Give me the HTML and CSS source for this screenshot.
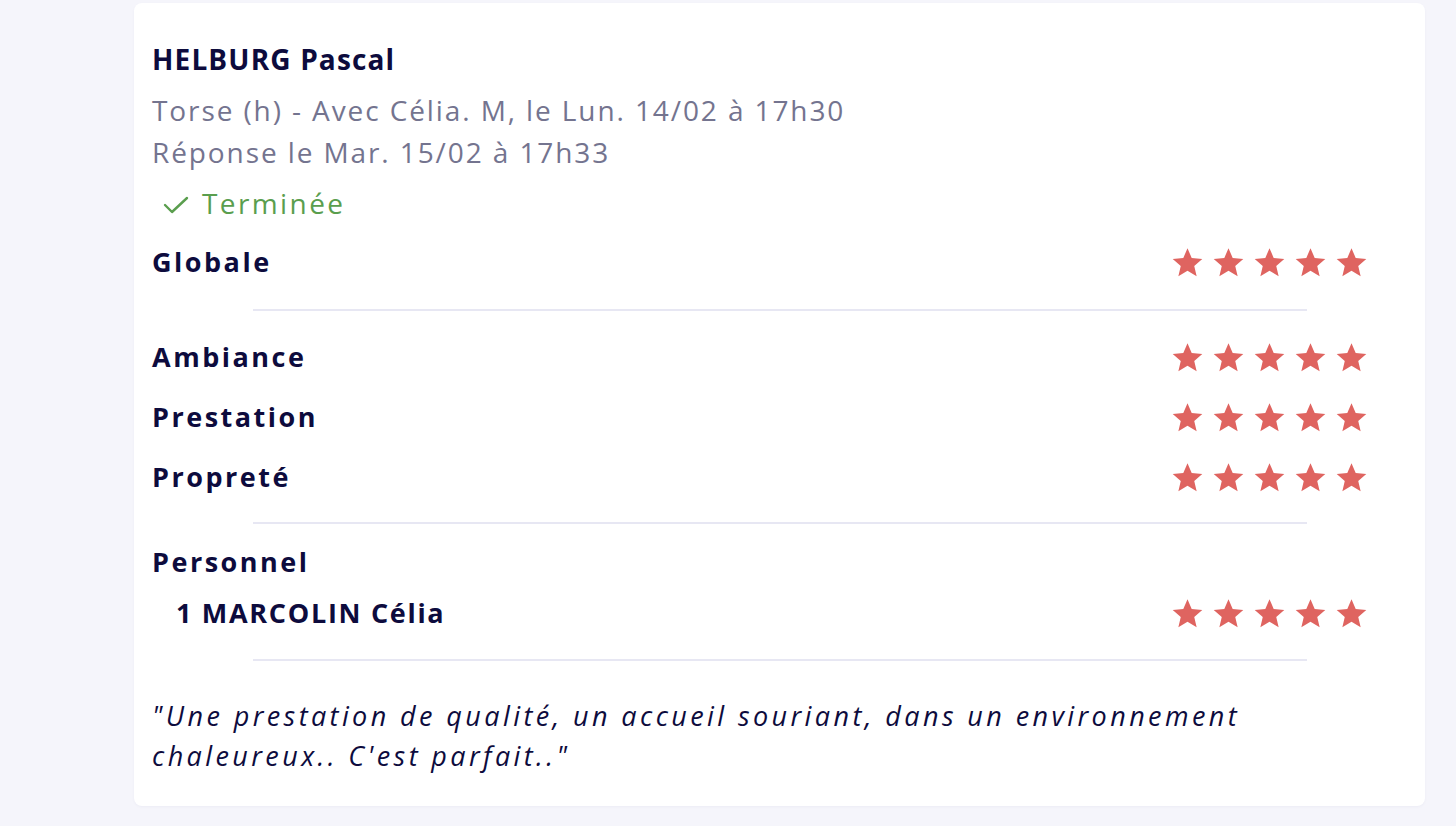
FILE: index.html
```html
<!DOCTYPE html>
<html lang="fr">
<head>
  <meta charset="UTF-8">
  <meta name="viewport" content="width=device-width, initial-scale=1.0">
  <title>Avis client</title>
  <link rel="stylesheet" href="styles.css">
</head>
<body>

  <div class="review">
    <div class="client">HELBURG Pascal</div>
    <div class="meta first">Torse (h) - Avec Célia. M, le Lun. 14/02 à 17h30</div>
    <div class="meta">Réponse le Mar. 15/02 à 17h33</div>

    <div class="status">
      <svg class="check" viewBox="0 0 26 20" width="26" height="20">
        <polyline points="2,10 9,17 24,3" fill="none" stroke="#5a9e4e" stroke-width="2.4" stroke-linecap="round" stroke-linejoin="round"/>
      </svg>
      <span>Terminée</span>
    </div>

    <!-- Note globale -->
    <div class="row global">
      <span class="label">Globale</span>
      <div class="stars" data-note="5"></div>
    </div>

    <hr class="sep sep-1">

    <!-- Notes détaillées -->
    <div class="row r-ambiance">
      <span class="label">Ambiance</span>
      <div class="stars" data-note="5"></div>
    </div>
    <div class="row r-next">
      <span class="label">Prestation</span>
      <div class="stars" data-note="5"></div>
    </div>
    <div class="row r-next">
      <span class="label">Propreté</span>
      <div class="stars" data-note="5"></div>
    </div>

    <hr class="sep sep-2">

    <!-- Personnel -->
    <div class="row r-staff-title">
      <span class="label">Personnel</span>
    </div>
    <div class="row r-staff">
      <span class="label staff">1 MARCOLIN Célia</span>
      <div class="stars" data-note="5"></div>
    </div>

    <hr class="sep sep-3">

    <p class="comment">"Une prestation de qualité, un accueil souriant, dans un environnement chaleureux.. C'est parfait.."</p>
  </div>

  <script>
    // Dessine les étoiles de chaque note
    const star = '<svg viewBox="0 0 24 24" width="33" height="33"><path d="M12 1.6l3.05 7.1 7.7.7-5.85 5.1 1.75 7.55L12 18.05 5.35 22.05 7.1 14.5 1.25 9.4l7.7-.7z" fill="#df6460"/></svg>';
    document.querySelectorAll('.stars').forEach(el => {
      const note = parseInt(el.dataset.note, 10);
      el.innerHTML = star.repeat(note);
    });
  </script>

</body>
</html>
```

FILE: styles.css
```css
* {
  margin: 0;
  padding: 0;
  box-sizing: border-box;
}

body {
  font-family: 'Open Sans', sans-serif;
  background-color: #f5f5fb;
  color: #0d0b3d;
  padding: 3px 31px 20px 134px;
}

.review {
  width: 1291px;
  background-color: #fff;
  border-radius: 8px;
  padding: 34px 57px 30px 18px;
  box-shadow: 0 1px 3px rgba(30, 30, 90, 0.04);
}

.client {
  font-size: 28px;
  font-weight: 700;
  line-height: 44px;
  letter-spacing: 1.15px;
}

.meta {
  font-size: 28px;
  line-height: 42px;
  color: #74748f;
  letter-spacing: 1.9px;
}

.meta.first {
  margin-top: 8px;
}

.status {
  display: flex;
  align-items: center;
  gap: 13px;
  margin-top: 10px;
  height: 40px;
  padding-left: 11px;
  font-size: 28px;
  color: #5a9e4e;
  letter-spacing: 2.4px;
}

.check {
  margin-top: 4px;
}

.row {
  display: flex;
  justify-content: space-between;
  align-items: center;
  height: 40px;
}

.label {
  font-size: 27px;
  font-weight: 700;
  letter-spacing: 2.5px;
}

.staff {
  padding-left: 24px;
  letter-spacing: 1.7px;
}

.stars {
  display: flex;
  gap: 8px;
  margin-top: 2px;
}

.stars svg {
  display: block;
}

.global {
  margin-top: 18px;
}

.r-ambiance {
  margin-top: 25px;
}

.r-next {
  margin-top: 20px;
}

.r-staff-title {
  margin-top: 17px;
}

.r-staff {
  margin-top: 11px;
}

.sep {
  border: none;
  height: 2px;
  background-color: #e7e7f3;
  width: 1054px;
  margin-left: 101px;
}

.sep-1 {
  margin-top: 28px;
}

.sep-2 {
  margin-top: 26px;
}

.sep-3 {
  margin-top: 27px;
}

.comment {
  margin-top: 35px;
  font-size: 27px;
  font-style: italic;
  line-height: 40px;
  letter-spacing: 3.4px;
  max-width: 1120px;
}
```
